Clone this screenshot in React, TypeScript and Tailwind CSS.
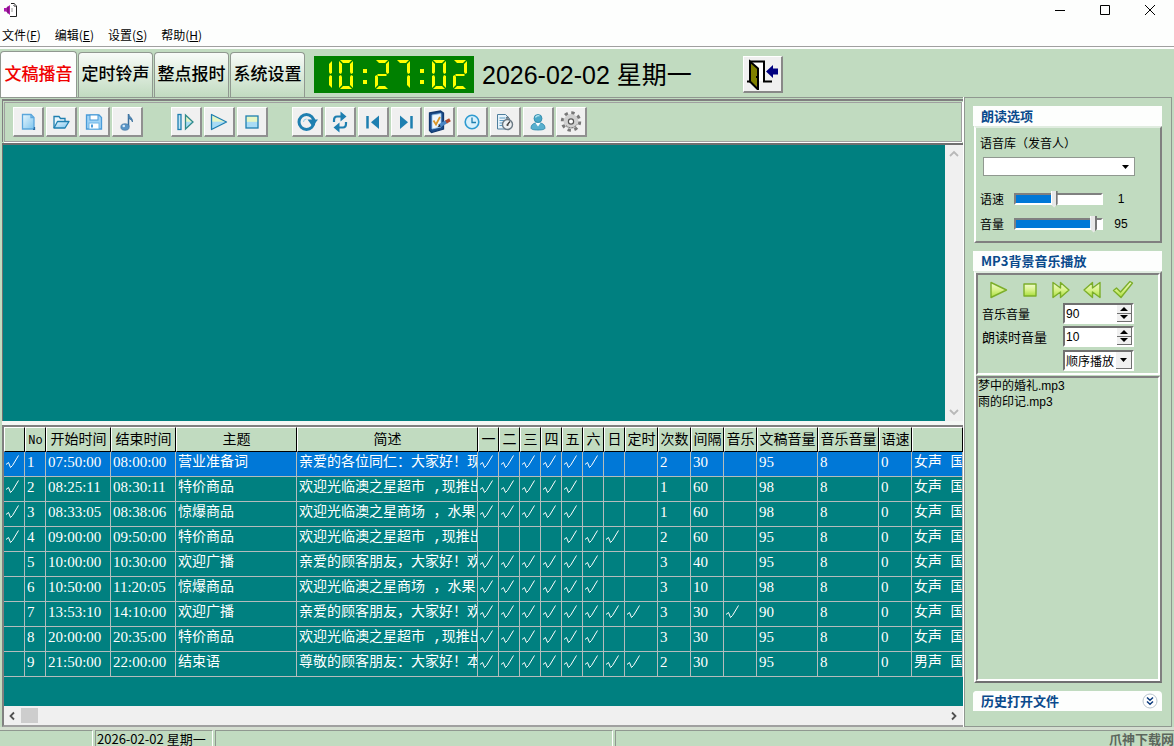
import React, { useState } from "react";

const SANS = "font-['Liberation_Sans','Noto_Sans_CJK_SC',sans-serif]";
const CJK = "font-['Noto_Sans_CJK_SC',sans-serif]";
const MONO = "font-['Liberation_Mono','Noto_Sans_CJK_SC',monospace]";

/* ---------- seven segment clock ---------- */

const SEGMENTS: Record<string, string> = {
  a: "1,0 13,0 10,3 4,3",
  b: "14,1 14,13 12,14 11,12 11,4",
  c: "14,28 14,16 12,15 11,17 11,25",
  d: "1,29 13,29 10,26 4,26",
  e: "0,28 0,16 2,15 3,17 3,25",
  f: "0,1 0,13 2,14 3,12 3,4",
  g: "3,14 11,14 12,15 11,16 3,16 2,15",
};

const DIGITS: Record<string, string> = {
  "0": "abcdef",
  "1": "bc",
  "2": "abged",
  "7": "abc",
};

function Clock({ value }: { value: string }) {
  return (
    <div role="img" aria-label={value} className="flex h-[37px] w-40 items-center bg-[#008000] pl-[2px]">
      {value.split("").map((ch, i) =>
        ch === ":" ? (
          <svg key={i} width="15" height="30" viewBox="0 0 15 30" fill="#ffff00">
            <rect x="5" y="9" width="4" height="4" />
            <rect x="5" y="20" width="4" height="4" />
          </svg>
        ) : (
          <svg key={i} width="21" height="30" viewBox="-1 0 21 30" fill="#ffff00" overflow="visible">
            <g transform="translate(1 0)">
              {DIGITS[ch].split("").map((s) => (
                <polygon key={s} points={SEGMENTS[s]} />
              ))}
            </g>
          </svg>
        )
      )}
    </div>
  );
}

/* ---------- icons ---------- */

const BLUE = "#1e7fb0";

const Defs = () => (
  <svg width="0" height="0" className="absolute" aria-hidden="true">
    <defs>
      <linearGradient id="sky" x1="0" y1="0" x2="1" y2="1">
        <stop offset="0" stopColor="#e8f6fd" />
        <stop offset="1" stopColor="#7cc4ee" />
      </linearGradient>
      <linearGradient id="lime" x1="0" y1="0" x2="0" y2="1">
        <stop offset="0" stopColor="#f2fbd0" />
        <stop offset="0.5" stopColor="#d8f28a" />
        <stop offset="1" stopColor="#aadf3c" />
      </linearGradient>
      <linearGradient id="half" x1="0" y1="0" x2="0" y2="1">
        <stop offset="0.45" stopColor="#e6f5c4" />
        <stop offset="0.5" stopColor="#a9dcf5" />
      </linearGradient>
    </defs>
  </svg>
);

const Icon = ({ children }: { children: React.ReactNode }) => (
  <svg width="24" height="24" viewBox="0 0 24 24" fill="none" stroke={BLUE} strokeWidth="1.3">
    {children}
  </svg>
);

const GearIcon = () => (
  <Icon>
    <g stroke="#777" strokeWidth="3.6" strokeDasharray="3.2 3.4">
      <circle cx="12" cy="11.500" r="8.4" />
    </g>
    <circle cx="12" cy="11.500" r="5.200" stroke="#d0d0d0" strokeWidth="4.500" />
    <circle cx="12" cy="11.500" r="2.600" fill="#fff" stroke="#555" strokeWidth="1.200" />
    <path d="M7 15.500a7 7 0 0 0 11-1" stroke="#666" strokeWidth="1" strokeDasharray="2 1" />
  </Icon>
);

const TOOLS: { label: string; icon: React.ReactNode }[][] = [
  [
    {
      label: "新建",
      icon: (
        <Icon>
          <path d="M6.500 4.500h8.500l3 3v11.500H6.500z" fill="url(#sky)" stroke="#5aa6dc" />
          <path d="M15 4.500v3h3" stroke="#5aa6dc" />
          <path d="M17 19.300h1.500V17" stroke="#2a6ea5" />
        </Icon>
      ),
    },
    {
      label: "打开",
      icon: (
        <Icon>
          <path d="M5 18V6.500h5l1.500 2H16v3" fill="#e8f6fd" />
          <path d="M5 18l3.500-6.500H20L16 18z" fill="url(#sky)" strokeLinejoin="round" />
        </Icon>
      ),
    },
    {
      label: "保存",
      icon: (
        <Icon>
          <path d="M4.500 5h12.500l2.500 2.500V19h-15z" fill="#9fd3f6" stroke="#4a9bd8" />
          <rect x="8" y="5" width="8" height="5" fill="#fff" stroke="#4a9bd8" strokeWidth="1" />
          <rect x="7" y="13" width="10" height="6" fill="#fff" stroke="#6fb6e6" strokeWidth="1" />
          <rect x="9" y="14.500" width="2" height="3" fill="#4a9bd8" stroke="none" />
        </Icon>
      ),
    },
    {
      label: "音乐",
      icon: (
        <Icon>
          <path d="M13.500 17V4" stroke="#3a6f9c" strokeWidth="1.500" />
          <path d="M13.500 4c.5 3 4.500 3.500 4 8-.8-2-2-3-4-3.500" fill="#4d86b5" stroke="#3a6f9c" strokeWidth=".8" />
          <ellipse cx="10" cy="17" rx="4.200" ry="3.300" fill="#5a95c6" stroke="#3a6f9c" strokeWidth=".6" />
          <circle cx="8.800" cy="16" r="1.300" fill="#d5e9f8" stroke="none" />
        </Icon>
      ),
    },
  ],
  [
    {
      label: "单步播放",
      icon: (
        <Icon>
          <rect x="4" y="4.500" width="3" height="15" fill="#bfe5f7" />
          <path d="M11.500 5v14l7.500-7z" fill="url(#half)" stroke="#2f8a8a" />
        </Icon>
      ),
    },
    {
      label: "播放",
      icon: (
        <Icon>
          <path d="M4.500 4.500v15l15-7.500z" fill="url(#half)" strokeLinejoin="round" />
        </Icon>
      ),
    },
    {
      label: "停止",
      icon: (
        <Icon>
          <rect x="6" y="6" width="12" height="12" fill="url(#half)" />
        </Icon>
      ),
    },
  ],
  [
    {
      label: "循环",
      icon: (
        <Icon>
          <circle cx="11.500" cy="12" r="7.500" strokeWidth="3" />
          <path d="M12.500 9.500H23l-5.500 7z" fill={BLUE} stroke="none" />
          <path d="M8.500 12a3 3 0 0 1 3-3" stroke="#8fd0ea" strokeWidth="1" />
        </Icon>
      ),
    },
    {
      label: "全部循环",
      icon: (
        <Icon>
          <path d="M6 12V10.500C6 8 7 6.500 9 6.500h4.500M18 12v1.500c0 2.500-1 4-3 4h-4.500" strokeWidth="2.200" />
          <path d="M12.500 1.500l6 5-6 5zM11.500 12.500v10l-6-5z" fill={BLUE} stroke="none" />
        </Icon>
      ),
    },
    {
      label: "上一首",
      icon: (
        <Icon>
          <path d="M6.500 6v12.500" strokeWidth="2.500" />
          <path d="M18 5.500v13.500l-8-6.750z" fill={BLUE} stroke="none" />
        </Icon>
      ),
    },
    {
      label: "下一首",
      icon: (
        <Icon>
          <path d="M17.500 6v12.500" strokeWidth="2.500" />
          <path d="M6 5.500v13.500l8-6.750z" fill={BLUE} stroke="none" />
        </Icon>
      ),
    },
    {
      label: "编辑任务",
      icon: (
        <Icon>
          <path d="M2.500 3l11-2 3 2v16l-12 3.500-2-2z" fill="#1c4d8c" stroke="#123a70" />
          <path d="M5 5l9-1.500v13.500l-9 2z" fill="#eef6fd" stroke="#8fc3ee" strokeWidth=".8" />
          <path d="M6.500 10.500l2.500 4 4-7.500" stroke="#d9962a" strokeWidth="1.800" />
          <path d="M12 16l8-4.500" stroke="#4a86c4" strokeWidth="3.500" />
          <path d="M19 12l4-2.200" stroke="#b0492c" strokeWidth="3.500" />
          <path d="M10.500 17l2-2.500 1.200 2z" fill="#222" stroke="none" />
        </Icon>
      ),
    },
    {
      label: "定时",
      icon: (
        <Icon>
          <circle cx="12" cy="12" r="6.800" fill="#d9f0fb" stroke="#2f9bd0" strokeWidth="1.600" />
          <path d="M12 7.500V12.500h4" />
        </Icon>
      ),
    },
    {
      label: "日志",
      icon: (
        <Icon>
          <path d="M4.500 4.500h8l4 4V19h-12z" fill="#e6f3fb" stroke="#4f7f9e" strokeWidth="1" />
          <path d="M6.500 8h6M6.500 10.500h5M6.500 13h4M6.500 15.500h4" stroke="#5d9cc4" strokeWidth="1" />
          <circle cx="14.500" cy="14.500" r="5" fill="#eef1f3" stroke="#6b7a85" strokeWidth="1.400" />
          <path d="M13 7.800h3" stroke="#6b7a85" strokeWidth="2" />
          <path d="M14.500 14.500l2.500-3" stroke="#333" strokeWidth="1.200" />
          <circle cx="14.500" cy="15" r="1.100" fill="#444" stroke="none" />
        </Icon>
      ),
    },
    {
      label: "用户",
      icon: (
        <Icon>
          <path d="M5 18c0-3 2-4.500 4.500-5h5c2.500.5 4.500 2 4.500 5 0 1.500-3 2-7 2s-7-.5-7-2z" fill="#58b0cf" stroke="#2b86a8" strokeWidth=".8" />
          <path d="M9.500 13l2.500 3.500 2.500-3.500z" fill="#fff" stroke="none" />
          <circle cx="12" cy="8.500" r="4" fill="#4aa9c8" stroke="#2b86a8" strokeWidth=".8" />
          <path d="M9.500 7.500a3 3 0 0 1 4-1.500" stroke="#b9e6f2" strokeWidth="1.300" />
        </Icon>
      ),
    },
    { label: "选项", icon: <GearIcon /> },
  ],
];

const PLAYER: { label: string; icon: React.ReactNode }[] = [
  { label: "播放", icon: <path d="M3 3.500v15l15.500-7.500z" /> },
  { label: "停止", icon: <rect x="5" y="5" width="12" height="12" /> },
  { label: "快进", icon: <path d="M3 3.500v15l7.500-5.500v5.500l8.500-7.500-8.500-7.500v5.500z" /> },
  { label: "快退", icon: <path d="M19 3.500v15l-7.500-5.500v5.500L3 11l8.500-7.500v5.500z" /> },
  { label: "确定", icon: <path d="M1.500 11.500l3-2.500 4 4L18 2.500l2.500 1.500L9 18.500z" /> },
];

/* ---------- schedule data ---------- */

type Row = {
  on: boolean;
  start: string;
  end: string;
  title: string;
  brief: string;
  days: string;
  timed: boolean;
  times: number;
  gap: number;
  music: boolean;
  vol: number;
  voice: string;
};

const GREET = "亲爱的各位同仁：大家好！现";
const MARKET = "欢迎光临澳之星超市 ,现推出";
const MALL = "欢迎光临澳之星商场 ，水果";
const FRIEND = "亲爱的顾客朋友，大家好！欢";
const CLOSE = "尊敬的顾客朋友：大家好！本";

const r = (
  on: boolean, start: string, end: string, title: string, brief: string, days: string,
  timed: boolean, times: number, gap: number, music: boolean, vol: number, voice = "女声"
): Row => ({ on, start, end, title, brief, days, timed, times, gap, music, vol, voice });

const ROWS: Row[] = [
  r(true, "07:50:00", "08:00:00", "营业准备词", GREET, "1111110", false, 2, 30, false, 95),
  r(true, "08:25:11", "08:30:11", "特价商品", MARKET, "1111100", false, 1, 60, false, 98),
  r(true, "08:33:05", "08:38:06", "惊爆商品", MALL, "1111100", false, 1, 60, false, 98),
  r(true, "09:00:00", "09:50:00", "特价商品", MARKET, "0000111", false, 2, 60, false, 95),
  r(false, "10:00:00", "10:30:00", "欢迎广播", FRIEND, "1111110", false, 3, 40, false, 95),
  r(false, "10:50:00", "11:20:05", "惊爆商品", MALL, "1111110", false, 3, 10, false, 98),
  r(false, "13:53:10", "14:10:00", "欢迎广播", FRIEND, "1111111", true, 3, 30, true, 90),
  r(false, "20:00:00", "20:35:00", "特价商品", MARKET, "1111110", false, 3, 30, false, 95),
  r(false, "21:50:00", "22:00:00", "结束语", CLOSE, "1111111", true, 2, 30, false, 95, "男声"),
];

const COLUMNS = [
  { name: "", w: "w-[21px]" },
  { name: "No", w: "w-[21px]" },
  { name: "开始时间", w: "w-[65px]" },
  { name: "结束时间", w: "w-[65px]" },
  { name: "主题", w: "w-[121px]" },
  { name: "简述", w: "w-[181px]" },
  { name: "一", w: "w-[21px]" },
  { name: "二", w: "w-[21px]" },
  { name: "三", w: "w-[21px]" },
  { name: "四", w: "w-[21px]" },
  { name: "五", w: "w-[21px]" },
  { name: "六", w: "w-[21px]" },
  { name: "日", w: "w-[21px]" },
  { name: "定时", w: "w-[33px]" },
  { name: "次数", w: "w-[33px]" },
  { name: "间隔", w: "w-[33px]" },
  { name: "音乐", w: "w-[33px]" },
  { name: "文稿音量", w: "w-[61px]" },
  { name: "音乐音量", w: "w-[61px]" },
  { name: "语速", w: "w-[33px]" },
  { name: "", w: "" },
];

const Tick = ({ on }: { on: boolean }) =>
  on ? (
    <svg role="img" aria-label="√" className="mt-[3px]" width="14" height="14" viewBox="0 0 14 14" fill="none" stroke="#fff" strokeWidth="1">
      <path d="M0 9.500L2.500 7.500L4.500 12.500L6.500 10.500L12.500.5" />
    </svg>
  ) : null;

function Cell({ children, digits }: { children?: React.ReactNode; digits?: boolean }) {
  return (
    <td
      className={
        "h-[25px] overflow-hidden whitespace-nowrap border-b border-r border-[#b4bcbc] pl-[2px] align-top leading-5 " +
        (digits ? "font-['Liberation_Serif',serif] text-[15px]" : "text-sm")
      }
    >
      {children}
    </td>
  );
}

function Schedule() {
  const [selected, setSelected] = useState(0);
  return (
    <table className={MONO + " w-full table-fixed border-separate border-spacing-0 text-white"}>
      <thead>
        <tr>
          {COLUMNS.map((c, i) => (
            <th
              key={i}
              className={
                c.w +
                " h-[25px] overflow-hidden whitespace-nowrap border-b border-l border-r border-t border-b-black border-l-white border-r-black border-t-white bg-[#c1dbc0] p-0 text-sm leading-5 font-normal text-black"
              }
            >
              {c.name === "No" ? <span className="text-xs">No</span> : <span className="-mx-1">{c.name}</span>}
            </th>
          ))}
        </tr>
      </thead>
      <tbody>
        {ROWS.map((row, i) => (
          <tr key={i} onClick={() => setSelected(i)} className={i === selected ? "bg-[#0078d7]" : "bg-[#008080]"}>
            <Cell><Tick on={row.on} /></Cell>
            <Cell digits>{i + 1}</Cell>
            <Cell digits>{row.start}</Cell>
            <Cell digits>{row.end}</Cell>
            <Cell>{row.title}</Cell>
            <Cell>{row.brief}</Cell>
            {row.days.split("").map((d, k) => (
              <Cell key={k}><Tick on={d === "1"} /></Cell>
            ))}
            <Cell><Tick on={row.timed} /></Cell>
            <Cell digits>{row.times}</Cell>
            <Cell digits>{row.gap}</Cell>
            <Cell><Tick on={row.music} /></Cell>
            <Cell digits>{row.vol}</Cell>
            <Cell digits>8</Cell>
            <Cell digits>0</Cell>
            <Cell>{row.voice} 国</Cell>
          </tr>
        ))}
      </tbody>
    </table>
  );
}

/* ---------- side panel ---------- */

function Slider({ id, label, min, max, value, onChange }: {
  id: string; label: string; min: number; max: number; value: number; onChange: (n: number) => void;
}) {
  const pct = ((value - min) / (max - min)) * 100;
  return (
    <div className="flex h-[25px] items-center text-xs">
      <label htmlFor={id} className="w-[34px]">{label}</label>
      <input
        id={id}
        type="range"
        min={min}
        max={max}
        value={value}
        onChange={(e) => onChange(Number(e.target.value))}
        style={{ "--fill": pct + "%" } as React.CSSProperties}
        className="h-[17px] w-[89px] appearance-none bg-transparent [&::-webkit-slider-runnable-track]:h-3 [&::-webkit-slider-runnable-track]:border-2 [&::-webkit-slider-runnable-track]:border-b-white [&::-webkit-slider-runnable-track]:border-l-[#808080] [&::-webkit-slider-runnable-track]:border-r-white [&::-webkit-slider-runnable-track]:border-t-[#808080] [&::-webkit-slider-runnable-track]:bg-[linear-gradient(to_right,#0078d7_var(--fill),white_var(--fill))] [&::-webkit-slider-thumb]:-mt-1 [&::-webkit-slider-thumb]:h-[17px] [&::-webkit-slider-thumb]:w-[7px] [&::-webkit-slider-thumb]:appearance-none [&::-webkit-slider-thumb]:bg-[linear-gradient(to_right,#fff_15%,#e8e8e8_15%,#e8e8e8_71%,#777_71%)] [&::-webkit-slider-thumb]:[clip-path:polygon(0_0,100%_0,100%_80%,50%_100%,0_80%)]"
      />
      <output htmlFor={id} className={SANS + " w-9 text-center"}>{value}</output>
    </div>
  );
}

function Spin({ id, label, value, onChange, labelClass }: {
  id: string; label: string; value: number; onChange: (n: number) => void; labelClass: string;
}) {
  return (
    <div className="flex items-center justify-between">
      <label htmlFor={id} className={labelClass}>{label}</label>
      <div className="flex h-[21px] w-[71px] border-2 border-b-white border-l-[#707070] border-r-white border-t-[#707070] bg-white">
        <input
          id={id}
          type="text"
          value={value}
          onChange={(e) => onChange(Number(e.target.value) || 0)}
          className={SANS + " w-0 flex-1 bg-white pl-px text-xs leading-none outline-none"}
        />
        <div className="flex w-[15px] flex-col">
          <button type="button" aria-label="增加" onClick={() => onChange(value + 1)} className="flex flex-1 items-center justify-center border-b border-r border-[#707070] bg-[#f0f0f0]">
            <svg width="8" height="4" viewBox="0 0 8 4"><path d="M0 4l4-4 4 4z" /></svg>
          </button>
          <button type="button" aria-label="减少" onClick={() => onChange(value - 1)} className="flex flex-1 items-center justify-center border-b border-r border-[#707070] bg-[#f0f0f0]">
            <svg width="8" height="4" viewBox="0 0 8 4"><path d="M0 0l4 4 4-4z" /></svg>
          </button>
        </div>
      </div>
    </div>
  );
}

const DownArrow = () => (
  <svg width="7" height="4" viewBox="0 0 7 4"><path d="M0 0h7L3.500 4z" /></svg>
);

const Heading = ({ children }: { children: React.ReactNode }) => (
  <h2 className="h-5 bg-[#fdfefd] pl-2 text-[13px] leading-5 font-bold text-[#0a4a8c]">{children}</h2>
);

function SidePanel() {
  const [speed, setSpeed] = useState(1);
  const [volume, setVolume] = useState(95);
  const [music, setMusic] = useState(90);
  const [reading, setReading] = useState(10);
  return (
    <aside className="flex w-[208px] shrink-0 flex-col border border-[#909890] pt-2 pr-[9px] pb-[15px] pl-2">
      <section>
        <Heading>朗读选项</Heading>
        <div className="ml-px flex h-[117px] flex-col border-2 border-b-[#808080] border-l-white border-r-[#808080] border-t-[#e0ece0] pt-1.5 pl-1">
          <label htmlFor="voice" className="text-xs leading-[18px]">语音库（发音人）</label>
          <div className="relative mt-[5px] ml-[3px] flex h-[19px] w-[152px] items-center bg-white">
            <select id="voice" className="h-full w-full appearance-none border border-[#909890] bg-white text-xs" />
            <span className="pointer-events-none absolute right-1.5"><DownArrow /></span>
          </div>
          <div className="mt-2.5">
            <Slider id="speed" label="语速" min={-7} max={11} value={speed} onChange={setSpeed} />
            <Slider id="volume" label="音量" min={0} max={100} value={volume} onChange={setVolume} />
          </div>
        </div>
      </section>

      <section className="mt-2 flex min-h-0 flex-1 flex-col">
        <Heading>MP3背景音乐播放</Heading>
        <div className="ml-px flex min-h-0 flex-1 flex-col gap-px border-2 border-b-[#707070] border-l-white border-r-[#808080] border-t-[#e0ece0]">
          <div className="flex h-[102px] flex-col border-2 border-b-white border-l-[#808080] border-r-white border-t-[#808080] pt-1 pr-6 pl-1">
            <div className="flex gap-[9px] pl-[6px]">
              {PLAYER.map((p) => (
                <button key={p.label} type="button" aria-label={p.label}>
                  <svg width="22" height="22" viewBox="0 0 22 22" fill="url(#lime)" stroke="#7cae2a" strokeWidth="1.400" strokeLinejoin="round">
                    {p.icon}
                  </svg>
                </button>
              ))}
            </div>
            <div className="mt-[2px] flex flex-col gap-0.5">
              <Spin id="music" label="音乐音量" value={music} onChange={setMusic} labelClass="text-xs" />
              <Spin id="reading" label="朗读时音量" value={reading} onChange={setReading} labelClass="text-[13px]" />
            </div>
            <div className="relative mt-[3px] flex h-[21px] w-[71px] shrink-0 items-center self-end">
              <select aria-label="播放方式" className="h-full w-full appearance-none border-2 border-b-white border-l-[#707070] border-r-white border-t-[#707070] bg-white pl-px text-xs">
                <option>顺序播放</option>
                <option>随机播放</option>
              </select>
              <span className="pointer-events-none absolute right-0.5 flex h-[17px] w-4 items-center justify-center border-r border-b border-[#707070] bg-[#f0f0f0]">
                <DownArrow />
              </span>
            </div>
          </div>
          <ul className={SANS + " flex-1 border-2 border-b-white border-l-[#808080] border-r-white border-t-[#808080] text-xs leading-4"}>
            <li>梦中的婚礼.mp3</li>
            <li>雨的印记.mp3</li>
          </ul>
        </div>
      </section>

      <section className="mt-2 flex items-center justify-between overflow-hidden rounded-t bg-[#fdfefd] pr-1">
        <Heading>历史打开文件</Heading>
        <button type="button" aria-label="展开">
          <svg width="16" height="16" viewBox="0 0 16 16" fill="none" stroke="#0a3a7c" strokeWidth="1.500">
            <circle cx="8" cy="8" r="7" fill="#fff" stroke="#b8c4cc" strokeWidth="1" />
            <path d="M5 4.500l3 2.700 3-2.700M5 8.500l3 2.700 3-2.700" />
          </svg>
        </button>
      </section>
    </aside>
  );
}

/* ---------- window ---------- */

const TABS = ["文稿播音", "定时铃声", "整点报时", "系统设置"];
const MENUS = [["文件", "F"], ["编辑", "E"], ["设置", "S"], ["帮助", "H"]];

const Chevron = ({ d, color = "#505050" }: { d: string; color?: string }) => (
  <svg width="10" height="10" viewBox="0 0 10 10" fill="none" stroke={color} strokeWidth="1.800"><path d={d} /></svg>
);

export default function App() {
  const [tab, setTab] = useState(0);
  return (
    <div className={CJK + " flex h-screen min-h-[600px] flex-col overflow-hidden bg-[#c1dbc0] text-black"}>
      <Defs />
      <header className="bg-[#fdfefd]">
        <div className="flex h-6 items-start justify-between">
          <svg className="mt-0.5 ml-1" width="16" height="16" viewBox="0 0 16 16" fill="none">
            <path d="M7 1.500h3l2.500 2.500V14.500H6" fill="#fff" stroke="#222" />
            <path d="M10 1v3.500h3" stroke="#222" strokeDasharray="1 1" />
            <path d="M0 6h2l4-3v10l-4-3.500H0z" fill="#b01cb0" />
            <path d="M4 4.500v7" stroke="#5a0a5a" />
            <path d="M8 6v4" stroke="#999" />
          </svg>
          <div className="mr-[2px] flex">
            {[["最小化", "M0 5.500h10"], ["最大化", "M.5.5h9v9h-9z"], ["关闭", "M0 0l10 10M10 0L0 10"]].map(([label, d]) => (
              <button key={label} type="button" aria-label={label} className="flex h-5 w-[45px] items-center justify-center">
                <svg width="10" height="10" viewBox="0 0 10 10" fill="none" stroke="#000" overflow="visible"><path d={d} /></svg>
              </button>
            ))}
          </div>
        </div>
        <nav className="flex h-[22px] items-center gap-[14px] pl-0.5 text-xs">
          {MENUS.map(([name, key]) => (
            <button key={key} type="button">{name}(<u>{key}</u>)</button>
          ))}
        </nav>
        <div className="h-[3px] border-t border-[#a0a0a0]" />
      </header>

      <div className="flex h-12 shrink-0 items-end">
        <div className="flex h-full items-end gap-px" role="tablist">
          {TABS.map((t, i) => (
            <button
              key={t}
              role="tab"
              type="button"
              aria-selected={i === tab}
              onClick={() => setTab(i)}
              className={
                "rounded-t border-t border-r border-l border-[#909890] pb-1 text-[17px] font-medium " +
                (i === tab
                  ? "h-[46px] w-[77px] bg-[#fdfefd] text-[#f00000]"
                  : "h-[45px] w-[75px] bg-linear-to-b from-[#f8fbf8] to-[#c1dbc0]")
              }
            >
              {t}
            </button>
          ))}
        </div>
        <div className="ml-[9px] flex h-full items-center pt-[3px]">
          <Clock value="10:27:02" />
          <div className={SANS + " ml-2 w-[261px] text-[25px] leading-none whitespace-nowrap"}>
            2026-02-02 <span className={CJK}>星期一</span>
          </div>
          <button type="button" aria-label="退出" className="flex h-[37px] w-10 items-center justify-center border border-b-2 border-r-2 border-b-[#888] border-l-white border-r-[#888] border-t-white bg-[#f0f0f0]">
            <svg width="34" height="32" viewBox="0 0 34 32" fill="none">
              <path d="M4 3.500h14v20h8M1 23.500h4" stroke="#000" strokeWidth="2" />
              <rect x="5" y="5" width="12" height="18" fill="#fff" />
              <path d="M4 3.500l8 7v21l-8-8z" fill="#808000" stroke="#000" strokeWidth="2" />
              <path d="M10 19h2" stroke="#000" strokeWidth="2" />
              <path d="M20 13.500l7-6.500v3.500h5v6h-5V20z" fill="#000080" />
            </svg>
          </button>
        </div>
      </div>

      <main className="flex min-h-0 flex-1">
        <div className="flex min-w-0 flex-1 flex-col border-t border-[#909890] pl-0.5">
          <div className="mt-px border-t-2 border-l border-[#808080]">
            <div className="mt-px mr-px ml-px flex h-10 items-center gap-7 border border-[#a0a0a0] pl-2 shadow-[0_1px_0_white,1px_0_0_white]">
              {TOOLS.map((group, g) => (
                <div key={g} className={g === 2 ? "-ml-1 flex gap-0.5" : "flex gap-0.5"}>
                  {group.map((tool) => (
                    <button
                      key={tool.label}
                      type="button"
                      aria-label={tool.label}
                      className="flex h-[30px] w-[31px] items-center justify-center border border-b-2 border-r-2 border-b-[#909090] border-l-white border-r-[#909090] border-t-white bg-[#f0f0f0]"
                    >
                      {tool.icon}
                    </button>
                  ))}
                </div>
              ))}
            </div>
          </div>

          <div className="mt-px flex min-h-0 flex-1 border-t-2 border-l border-[#707070]">
            <textarea aria-label="文稿" className={SANS + " flex-1 resize-none bg-[#008080] p-1 text-sm text-white outline-none"} />
            <div className="flex w-[18px] flex-col items-center justify-between bg-[#f0f0f0] py-1">
              <button type="button" aria-label="向上滚动"><Chevron d="M1 7l4-4 4 4" color="#b8b8b8" /></button>
              <button type="button" aria-label="向下滚动"><Chevron d="M1 3l4 4 4-4" color="#b8b8b8" /></button>
            </div>
          </div>

          <div className="h-1 bg-[#f4f7f4]" />

          <div className="flex h-[302px] shrink-0 flex-col border-t-2 border-b-2 border-l-2 border-[#808080] border-b-[#a0a0a0] bg-[#008080]">
            <div className="min-h-0 flex-1 overflow-hidden">
              <Schedule />
            </div>
            <div className="flex h-[19px] items-center justify-between bg-[#f0f0f0]">
              <div className="flex h-full items-center gap-[3px] pl-[3px]">
                <button type="button" aria-label="向左滚动"><Chevron d="M7 1.500L3.500 5 7 8.500" /></button>
                <span className="ml-px h-[15px] w-[17px] bg-[#cdcdcd]" />
              </div>
              <button type="button" aria-label="向右滚动" className="pr-1"><Chevron d="M3 1.500L6.500 5 3 8.500" /></button>
            </div>
          </div>
        </div>
        <div className="w-px bg-white" />
        <SidePanel />
        <div className="w-0.5" />
      </main>

      <footer className="flex shrink-0 gap-0.5 border-t-[3px] border-[#d4ded0] text-[13px] leading-4">
        <div className="h-4 w-[93px] border-t border-r border-t-[#909890] border-r-white" />
        <div className="h-4 w-[118px] border-t border-r border-l border-t-[#909890] border-r-white border-l-[#909890] pl-px whitespace-nowrap">2026-02-02 星期一</div>
        <div className="h-4 w-[398px] border-t border-r border-l border-t-[#909890] border-r-white border-l-[#909890]" />
        <div className="h-4 flex-1 overflow-hidden border-t border-l border-[#909890] text-right font-bold text-[#5c665c]">爪神下载网</div>
      </footer>
    </div>
  );
}
